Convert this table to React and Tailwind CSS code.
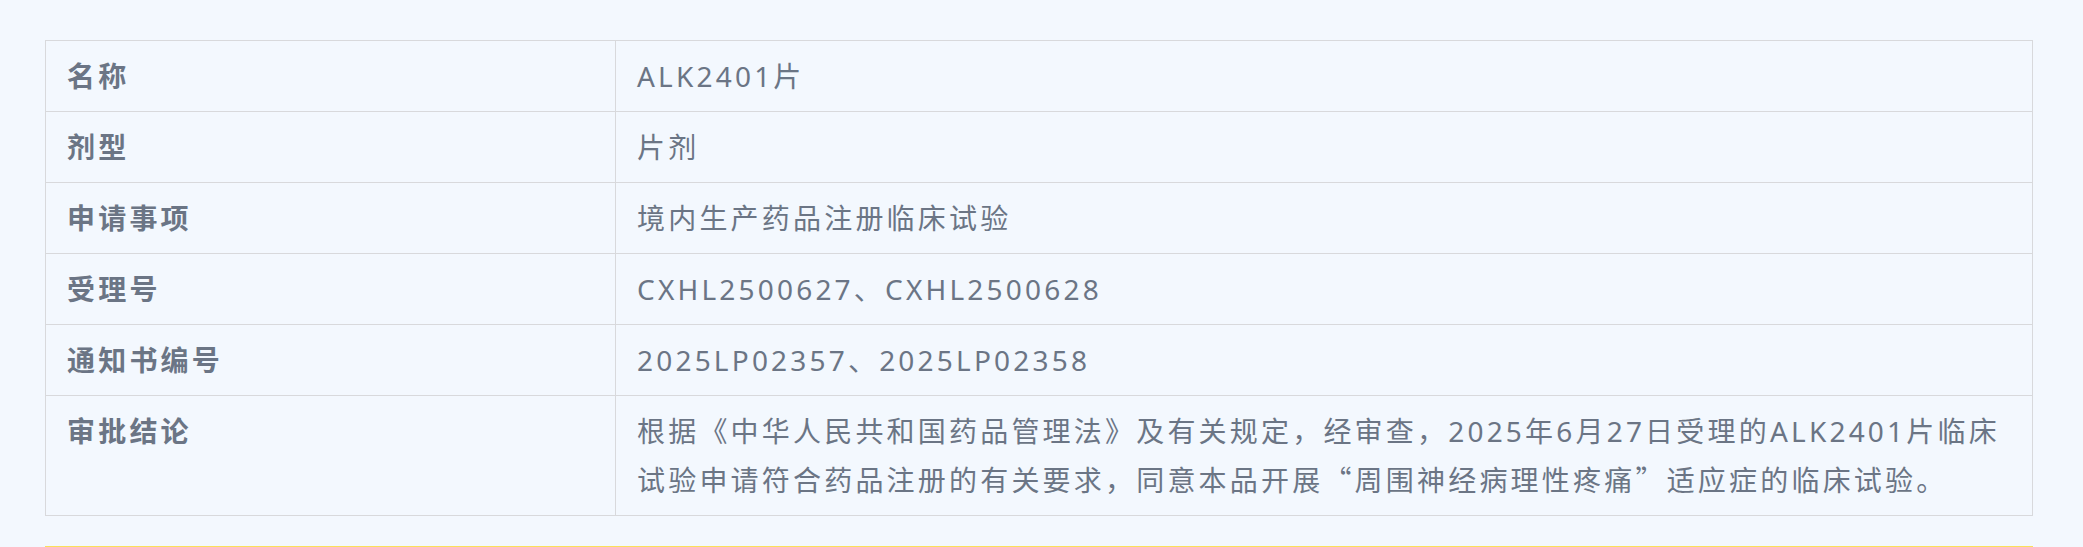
import React from "react";

const rows = [
  { label: "名称", value: "ALK2401片" },
  { label: "剂型", value: "片剂" },
  { label: "申请事项", value: "境内生产药品注册临床试验" },
  { label: "受理号", value: "CXHL2500627、CXHL2500628" },
  { label: "通知书编号", value: "2025LP02357、2025LP02358" },
];

function App() {
  return (
    <div className="min-h-[547px] bg-[#f3f8fe] pt-10 pl-[45px] pr-[50px] font-['Noto_Sans','Noto_Sans_CJK_SC',sans-serif] text-[28px] leading-[48px] tracking-[3.2px] text-[#6b7585]">
      {/* 药品信息表 */}
      <table className="w-full border-collapse border border-[#d8d9dc]">
        <tbody>
          {rows.map((row) => (
            <tr key={row.label}>
              <td className="w-[570px] border border-[#d8d9dc] px-[21px] py-[11px] align-top font-bold">
                {row.label}
              </td>
              <td className="border border-[#d8d9dc] px-[21px] py-[11px] align-top">
                {row.value}
              </td>
            </tr>
          ))}
          <tr>
            <td className="w-[570px] border border-[#d8d9dc] px-[21px] py-[11px] align-top font-bold">
              审批结论
            </td>
            <td className="border border-[#d8d9dc] px-[21px] py-[11px] align-top whitespace-nowrap">
              根据《中华人民共和国药品管理法》及有关规定，经审查，2025年6月27日受理的ALK2401片临床
              <br />
              试验申请符合药品注册的有关要求，同意本品开展
              <span className="font-['Noto_Sans_CJK_SC',sans-serif]">“</span>
              周围神经病理性疼痛
              <span className="font-['Noto_Sans_CJK_SC',sans-serif]">”</span>
              适应症的临床试验。
            </td>
          </tr>
        </tbody>
      </table>

      {/* 下一块内容的顶边 */}
      <div className="mt-[30px] h-10 border-t-2 border-[#fbe05a]"></div>
    </div>
  );
}

export default App;
